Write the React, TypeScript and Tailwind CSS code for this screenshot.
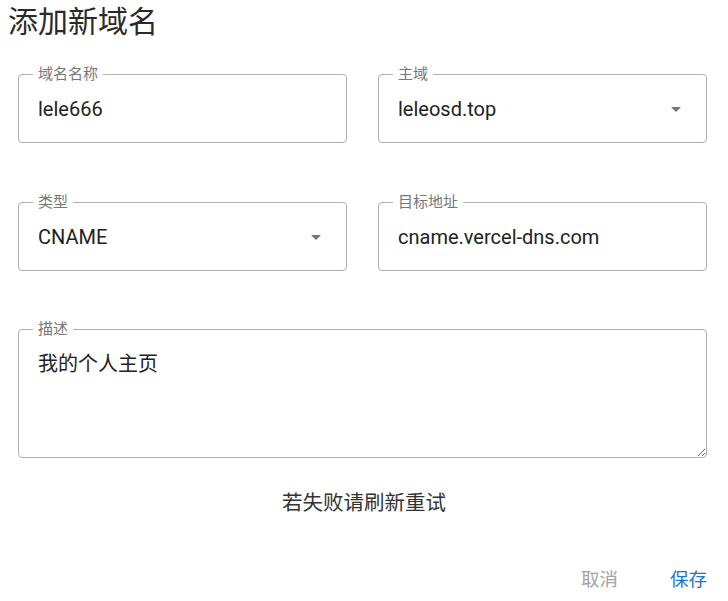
import React from "react";

const font = "font-['Roboto','Noto_Sans_CJK_SC',sans-serif]";

function ArrowDropDown() {
  return (
    <svg viewBox="0 0 24 24" className="w-[24px] h-[24px] shrink-0" fill="#757575">
      <path d="M7 10l5 5 5-5z" />
    </svg>
  );
}

function Field({ label, value, select }: { label: string; value: string; select?: boolean }) {
  return (
    <div className="relative h-[69px] rounded-[4px] border border-[#b0b0b0] flex items-center pl-[19px] pr-[18px]">
      <span className="absolute -top-[10px] left-[14px] bg-white px-[5px] text-[15px] leading-[18px] text-[#777]">
        {label}
      </span>
      <span className="flex-1 text-[20px] leading-[24px] text-[#222]">{value}</span>
      {select && <ArrowDropDown />}
    </div>
  );
}

export default function App() {
  return (
    <div className={`w-[728px] h-[601px] bg-white flex flex-col ${font}`}>
      <h2 className="pl-[8px] pt-[4px] text-[30px] leading-[36px] font-normal text-[#2a2a2a]">添加新域名</h2>

      <div className="mt-[34px] pl-[18px] pr-[21px]">
        <div className="grid grid-cols-2 gap-x-[31px] gap-y-[59px]">
          <Field label="域名名称" value="lele666" />
          <Field label="主域" value="leleosd.top" select />
          <Field label="类型" value="CNAME" select />
          <Field label="目标地址" value="cname.vercel-dns.com" />
        </div>

        <div className="relative mt-[58px] h-[129px] rounded-[4px] border border-[#b0b0b0] flex">
          <span className="absolute -top-[10px] left-[14px] bg-white px-[5px] text-[15px] leading-[18px] text-[#777]">
            描述
          </span>
          <textarea
            defaultValue="我的个人主页"
            className="flex-1 resize bg-transparent outline-none pl-[19px] pr-[14px] pt-[21px] text-[20px] leading-[26px] text-[#222]"
          />
        </div>
      </div>

      <p className="mt-[31px] text-center text-[20.5px] leading-[28px] text-[#333]">若失败请刷新重试</p>

      <div className="mt-[51px] flex justify-end gap-[52px] pr-[21px]">
        <button className="text-[18.5px] leading-[24px] text-[#a3a3a3]">取消</button>
        <button className="text-[18.5px] leading-[24px] text-[#1976d2]">保存</button>
      </div>
    </div>
  );
}
